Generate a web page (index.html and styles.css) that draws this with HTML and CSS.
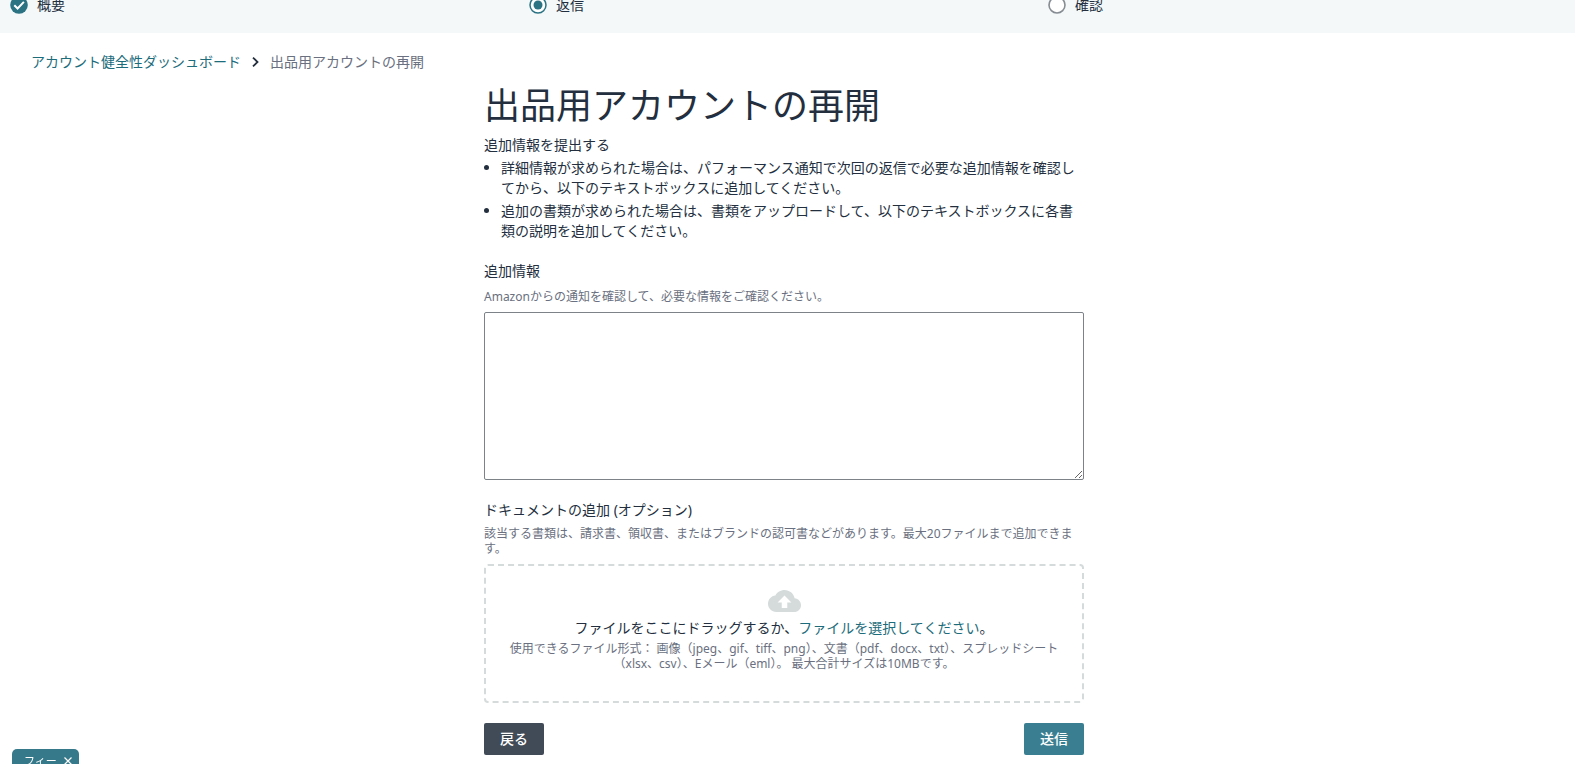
FILE: index.html
```html
<!DOCTYPE html>
<html lang="ja">
<head>
<meta charset="utf-8">
<meta name="viewport" content="width=device-width, initial-scale=1">
<title>出品用アカウントの再開</title>
<link rel="stylesheet" href="styles.css">
</head>
<body>
<header class="stepper">
  <ol class="steps">
    <li class="step">
      <svg class="step-icon" viewBox="0 0 18 18" aria-hidden="true"><circle cx="9" cy="9" r="8.800" fill="#2b7383"/><path d="M4.3 9.2l3.3 3.3 6.3-6.6" fill="none" stroke="#fff" stroke-width="2"/></svg>
      <span>概要</span>
    </li>
    <li class="step" aria-current="step">
      <svg class="step-icon" viewBox="0 0 18 18" aria-hidden="true"><circle cx="9" cy="9" r="8" fill="#fff" stroke="#2b7383" stroke-width="1.500"/><circle cx="9" cy="9" r="4.500" fill="#2b7383"/></svg>
      <span>返信</span>
    </li>
    <li class="step">
      <svg class="step-icon" viewBox="0 0 18 18" aria-hidden="true"><circle cx="9" cy="9" r="8" fill="#fff" stroke="#868c93" stroke-width="1.600"/></svg>
      <span>確認</span>
    </li>
  </ol>
</header>

<nav class="breadcrumb" aria-label="パンくずリスト">
  <a href="#">アカウント健全性ダッシュボード</a>
  <svg class="chevron" viewBox="0 0 9 12" aria-hidden="true"><path d="M2 1.600L6.500 6 2 10.400" fill="none" stroke="#232f3e" stroke-width="1.800"/></svg>
  <span>出品用アカウントの再開</span>
</nav>

<main class="content">
  <h1 class="title">出品用アカウントの再開</h1>
  <p class="lead">追加情報を提出する</p>
  <ul class="notes">
    <li>詳細情報が求められた場合は、パフォーマンス通知で次回の返信で必要な追加情報を確認してから、以下のテキストボックスに追加してください。</li>
    <li>追加の書類が求められた場合は、書類をアップロードして、以下のテキストボックスに各書類の説明を追加してください。</li>
  </ul>

  <form class="form">
    <div class="field">
      <label for="info">追加情報</label>
      <p class="hint" id="info-hint">Amazonからの通知を確認して、必要な情報をご確認ください。</p>
      <textarea class="info-box" id="info" aria-describedby="info-hint"></textarea>
    </div>

    <section class="documents">
      <h2 class="section-label">ドキュメントの追加 (オプション)</h2>
      <p class="hint">該当する書類は、請求書、領収書、またはブランドの認可書などがあります。最大20ファイルまで追加できます。</p>
      <div class="dropzone">
        <svg class="cloud" viewBox="0 4 24 16" aria-hidden="true"><path d="M19.350 10.040C18.670 6.590 15.640 4 12 4 9.110 4 6.600 5.640 5.350 8.040 2.340 8.360 0 10.910 0 14c0 3.310 2.690 6 6 6h13c2.760 0 5-2.240 5-5 0-2.640-2.050-4.780-4.650-4.960zM14 13v4h-4v-4H7l5-5 5 5h-3z" fill="#d5dbdb"/></svg>
        <p class="drop-text">ファイルをここにドラッグするか、<a href="#">ファイルを選択してください</a>。</p>
        <p class="hint">使用できるファイル形式： 画像（jpeg、gif、tiff、png）、文書（pdf、docx、txt）、スプレッドシート（xlsx、csv）、Eメール（eml）。 最大合計サイズは10MBです。</p>
      </div>
    </section>

    <div class="actions">
      <button class="button button-dark" type="button">戻る</button>
      <button class="button button-primary" type="submit">送信</button>
    </div>
  </form>
</main>

<aside class="feedback">
  <span>フィー</span>
  <button class="feedback-close" type="button" aria-label="閉じる"><svg viewBox="0 0 8 8" aria-hidden="true"><path d="M.5.5l7 7M7.500.5l-7 7" fill="none" stroke="#fff" stroke-width="1.200"/></svg></button>
</aside>
</body>
</html>
```

FILE: styles.css
```css
* {
  box-sizing: border-box;
}

html {
  overflow: hidden;
}

body {
  margin: 0;
  background: #fff;
  color: #232f3e;
  font: 14px/20px "Noto Sans", "Noto Sans CJK JP", sans-serif;
}

h1, h2, p, ul, ol {
  margin: 0;
  padding: 0;
}

a {
  color: #1c6c7b;
  text-decoration: none;
}

.stepper {
  display: flex;
  align-items: flex-end;
  height: 33px;
  padding: 0 8px 18px 10px;
  overflow: hidden;
  background: #f4f8f9;
}

.steps {
  display: grid;
  grid-template-columns: repeat(3, 1fr);
  flex: 1;
  list-style: none;
}

.step {
  display: flex;
  align-items: center;
  gap: 9px;
}

.step-icon {
  width: 18px;
  height: 18px;
}

.breadcrumb {
  display: flex;
  align-items: center;
  gap: 10px;
  padding: 19px 31px 0;
  color: #6a7080;
}

.chevron {
  width: 9px;
  height: 12px;
}

.content {
  max-width: 607px;
  margin: 12px auto 0;
  padding-right: 7px;
}

.title {
  font-size: 36px;
  font-weight: 400;
  line-height: 44px;
}

.lead {
  margin-top: 7px;
}

.notes {
  display: grid;
  gap: 3px;
  margin-top: 3px;
  padding-left: 17px;
}

.form {
  display: grid;
  gap: 20px;
  margin-top: 20px;
}

.field,
.documents {
  display: flex;
  flex-direction: column;
}

.hint {
  margin-top: 6px;
  color: #6a7080;
  font-size: 12px;
  line-height: 15px;
}

.field .hint {
  margin-top: 8px;
}

.info-box {
  width: 100%;
  height: 168px;
  margin-top: 8px;
  border: 1px solid #7d8288;
  border-radius: 2px;
  font: inherit;
}

.section-label {
  font-size: 14px;
  font-weight: 400;
  line-height: 20px;
}

.dropzone {
  display: flex;
  flex-direction: column;
  align-items: center;
  margin-top: 8px;
  padding: 24px 22px 30px;
  border: 2px dashed #d5dbdb;
  border-radius: 4px;
  text-align: center;
}

.cloud {
  width: 33px;
  height: 22px;
}

.drop-text {
  margin-top: 6px;
}

.dropzone .hint {
  margin-top: 3px;
}

.actions {
  display: flex;
  justify-content: space-between;
}

.button {
  padding: 6px 16px;
  border: 0;
  border-radius: 2px;
  color: #fff;
  font: inherit;
  font-weight: 500;
}

.button-dark {
  background: #414b58;
}

.button-primary {
  background: #3a7f91;
}

.feedback {
  position: fixed;
  bottom: 0;
  left: 12px;
  display: flex;
  align-items: center;
  gap: 7px;
  height: 15px;
  padding: 9px 7px 0 12px;
  border-radius: 5px 5px 0 0;
  background: #35798a;
  color: #fff;
  font-size: 11px;
}

.feedback-close {
  display: flex;
  width: 8px;
  padding: 0;
  border: 0;
  background: none;
}
```
